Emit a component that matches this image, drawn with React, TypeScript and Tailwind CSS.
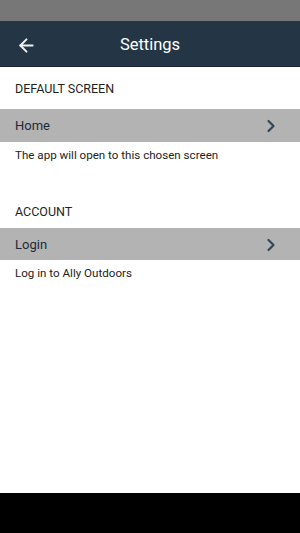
import { ArrowLeft, ChevronRight } from "lucide-react"

function SectionHeader({ title, className }: { title: string; className: string }) {
  return (
    <div className={`flex items-center px-[15px] pt-[3px] text-[12.5px] text-[#1f1f1f] ${className}`}>
      {title}
    </div>
  )
}

function NavRow({ label, className }: { label: string; className: string }) {
  return (
    <div className={`flex items-center justify-between bg-[#b3b3b3] pl-[15px] pr-[19px] pt-[1px] ${className}`}>
      <span className="text-[13px] text-[#1c2b3a]">{label}</span>
      <ChevronRight className="h-[20px] w-[20px] text-[#34475a]" strokeWidth={2.6} />
    </div>
  )
}

function Note({ text }: { text: string }) {
  return (
    <div className="flex h-[26px] items-center px-[15px] pt-[2px] text-[11.6px] text-[#222222]">{text}</div>
  )
}

export default function App() {
  return (
    <div
      className="flex h-[533px] w-[300px] flex-col bg-white"
      style={{ fontFamily: "Roboto, 'Liberation Sans', sans-serif" }}
    >
      {/* status bar */}
      <div className="h-[21px] bg-[#777777]" />

      {/* top bar */}
      <div className="relative flex h-[46px] items-center justify-center border-b border-[#1a2333] bg-[#243646] pt-[3px]">
        <ArrowLeft className="absolute left-[16px] top-[14px] h-[21px] w-[21px] text-[#eef1f4]" strokeWidth={2.2} />
        <span className="text-[16.5px] text-white">Settings</span>
      </div>

      <SectionHeader title="DEFAULT SCREEN" className="h-[42px]" />
      <NavRow label="Home" className="h-[33px]" />
      <Note text="The app will open to this chosen screen" />

      <div className="h-[26px]" />

      <SectionHeader title="ACCOUNT" className="h-[34px]" />
      <NavRow label="Login" className="h-[32px]" />
      <Note text="Log in to Ally Outdoors" />

      <div className="flex-1" />

      {/* system nav */}
      <div className="h-[40px] bg-black" />
    </div>
  )
}
